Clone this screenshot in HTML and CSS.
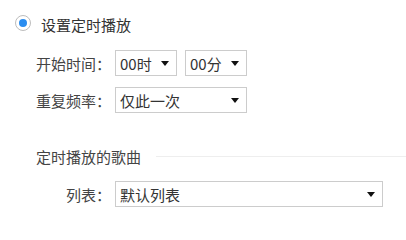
FILE: index.html
```html
<!DOCTYPE html>
<html lang="zh-CN">
<head>
<meta charset="utf-8">
<title>定时播放</title>
<link rel="stylesheet" href="styles.css">
</head>
<body>
<div class="page">
  <div class="radio-row">
    <span class="radio"><span class="dot"></span></span>
    <span class="radio-text">设置定时播放</span>
  </div>
  <div class="form">
    <div class="row">
      <span class="label">开始时间：</span>
      <div class="selects">
        <div class="select small"><span>00时</span><span class="arrow"></span></div>
        <div class="select small"><span>00分</span><span class="arrow"></span></div>
      </div>
    </div>
    <div class="row">
      <span class="label">重复频率：</span>
      <div class="select medium"><span>仅此一次</span><span class="arrow"></span></div>
    </div>
    <div class="section">
      <span class="section-title">定时播放的歌曲</span>
      <span class="section-line"></span>
    </div>
    <div class="row">
      <span class="label">列表：</span>
      <div class="select wide"><span>默认列表</span><span class="arrow"></span></div>
    </div>
  </div>
</div>
</body>
</html>
```
FILE: styles.css
```css
html, body {
  margin: 0;
  padding: 0;
  background: #ffffff;
}
body {
  font-family: "Noto Sans CJK SC", "Noto Sans", sans-serif;
  font-size: 15px;
  color: #333333;
}
.page {
  padding: 14px 0 0 15px;
}
.radio-row {
  display: flex;
  align-items: center;
  gap: 10px;
  height: 18px;
}
.radio {
  width: 16px;
  height: 16px;
  box-sizing: border-box;
  border: 1px solid #bdbdbd;
  border-radius: 50%;
  display: flex;
  align-items: center;
  justify-content: center;
}
.dot {
  width: 8px;
  height: 8px;
  border-radius: 50%;
  background: #2a8df0;
}
.radio-text {
  line-height: 18px;
  margin-top: 4px;
}
.form {
  margin-top: 18px;
  padding-left: 21px;
}
.row {
  display: flex;
  align-items: center;
  height: 26px;
}
.row + .row {
  margin-top: 11px;
}
.label {
  width: 79px;
  box-sizing: border-box;
  padding-right: 4px;
  text-align: right;
  white-space: nowrap;
  color: #444444;
}
.selects {
  display: flex;
  gap: 8px;
}
.select {
  height: 26px;
  box-sizing: border-box;
  border: 1px solid #cccccc;
  padding: 0 7px 0 4px;
  display: flex;
  align-items: center;
  justify-content: space-between;
  background: #ffffff;
  color: #333333;
}
.select.small { width: 62px; }
.select.medium { width: 132px; }
.select.wide { width: 268px; }
.arrow {
  width: 0;
  height: 0;
  border-left: 4px solid transparent;
  border-right: 4px solid transparent;
  border-top: 5px solid #111111;
}
.section {
  display: flex;
  align-items: center;
  gap: 15px;
  height: 20px;
  margin-top: 33px;
  margin-bottom: 15px;
}
.section-title {
  color: #444444;
  white-space: nowrap;
}
.section-line {
  flex: 1;
  border-top: 1px solid #eeeeee;
}
```
